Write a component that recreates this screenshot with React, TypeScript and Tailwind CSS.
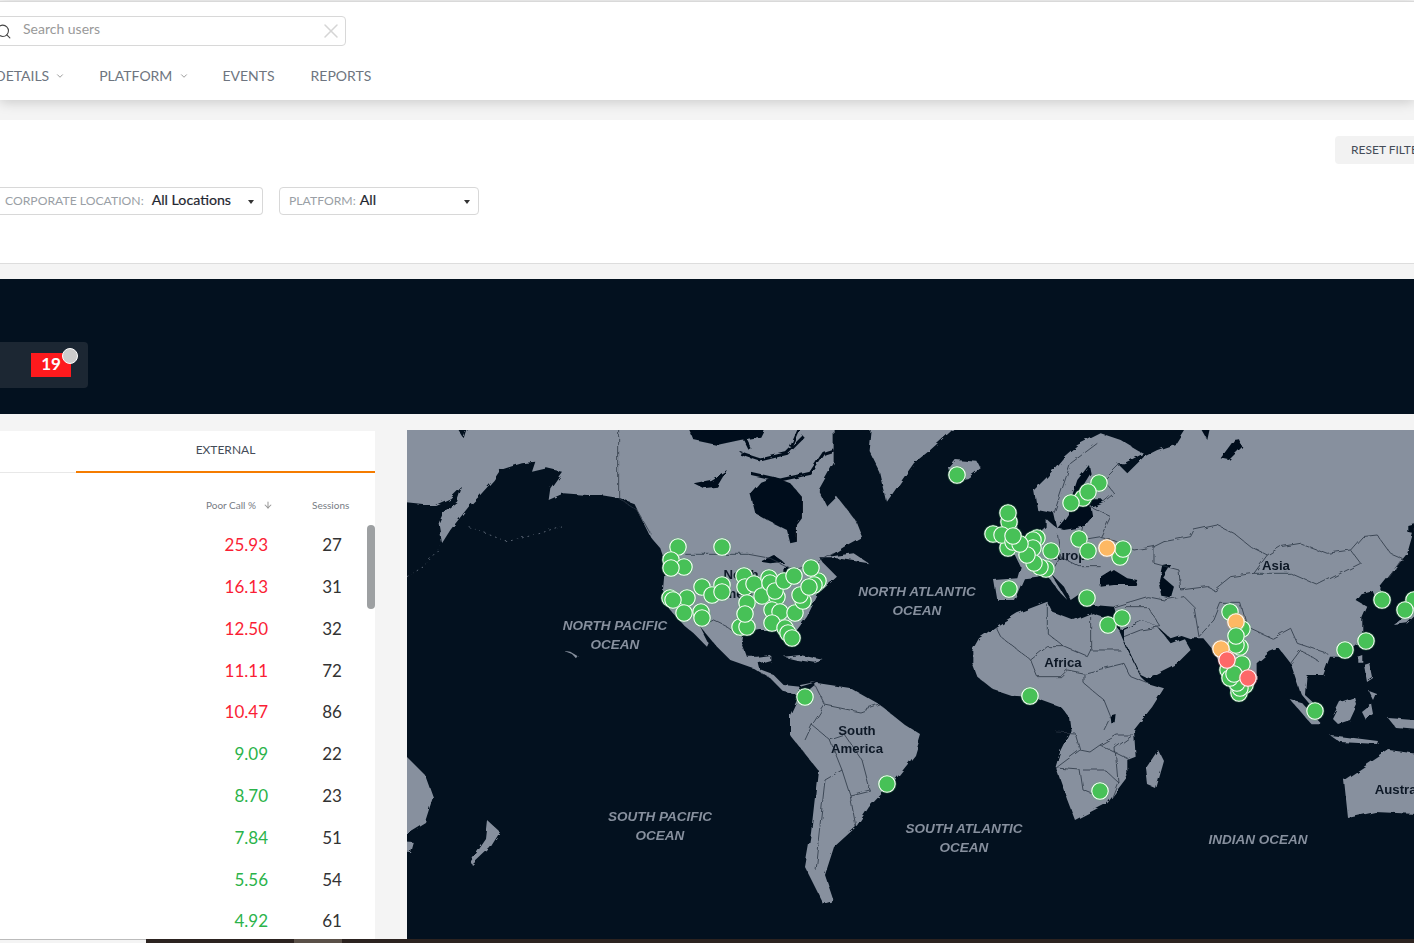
import { ArrowDown, ChevronDown, Search, X } from 'lucide-react';

const rows = [
    { poor: '25.93', sessions: 27, bad: true },
    { poor: '16.13', sessions: 31, bad: true },
    { poor: '12.50', sessions: 32, bad: true },
    { poor: '11.11', sessions: 72, bad: true },
    { poor: '10.47', sessions: 86, bad: true },
    { poor: '9.09', sessions: 22, bad: false },
    { poor: '8.70', sessions: 23, bad: false },
    { poor: '7.84', sessions: 51, bad: false },
    { poor: '5.56', sessions: 54, bad: false },
    { poor: '4.92', sessions: 61, bad: false },
];

const LAND = '#87909e';
const SEA = '#03111f';
const BORDER = '#2b3644';

// marker centres in page pixels, later ones sit on top
const greens = [
    [678, 547], [722, 547], [671, 560], [684, 567], [671, 568], [670, 598], [687, 598], [673, 600], [684, 613],
    [702, 587], [712, 595], [701, 612], [702, 618], [722, 585], [722, 592], [744, 576], [745, 587], [754, 584],
    [740, 627], [747, 627], [747, 603], [745, 614], [762, 596], [769, 578], [770, 583], [777, 597], [775, 591],
    [784, 581], [772, 610], [780, 612], [795, 613], [772, 623], [785, 628], [788, 633], [792, 638], [803, 601],
    [800, 595], [818, 581], [814, 585], [811, 568], [794, 576], [809, 587], [805, 697], [887, 784],
    [957, 475], [1083, 498], [1099, 483], [1088, 492], [1071, 503], [1009, 522], [1008, 513], [993, 534],
    [1008, 548], [1002, 535], [1037, 538], [1033, 540], [1033, 548], [1046, 569], [1040, 567], [1034, 563],
    [1027, 555], [1013, 542], [1020, 544], [1013, 536], [1051, 551], [1079, 539], [1088, 551], [1120, 557],
    [1123, 549], [1009, 589], [1087, 598], [1108, 625], [1122, 618], [1030, 696], [1100, 791], [1315, 711],
    [1382, 600], [1414, 600], [1405, 610], [1345, 650], [1366, 641], [1230, 612], [1242, 629], [1240, 647],
    [1236, 645],
];
const oranges = [[1107, 548], [1236, 622], [1221, 649]];
const lateGreens = [[1236, 636], [1242, 664], [1228, 670], [1245, 685], [1239, 693], [1240, 688], [1237, 683], [1230, 678], [1234, 674]];
const reds = [[1227, 660], [1248, 678]];

const oceanLabels = [
    { x: 615, y: 630, text: 'NORTH PACIFIC' },
    { x: 615, y: 649, text: 'OCEAN' },
    { x: 917, y: 596, text: 'NORTH ATLANTIC' },
    { x: 917, y: 615, text: 'OCEAN' },
    { x: 660, y: 821, text: 'SOUTH PACIFIC' },
    { x: 660, y: 840, text: 'OCEAN' },
    { x: 964, y: 833, text: 'SOUTH ATLANTIC' },
    { x: 964, y: 852, text: 'OCEAN' },
    { x: 1258, y: 844, text: 'INDIAN OCEAN' },
];

const landLabels = [
    { x: 741, y: 579, text: 'North' },
    { x: 741, y: 598, text: 'America' },
    { x: 857, y: 735, text: 'South' },
    { x: 857, y: 753, text: 'America' },
    { x: 1071, y: 560, text: 'Europe' },
    { x: 1276, y: 570, text: 'Asia' },
    { x: 1063, y: 667, text: 'Africa' },
    { x: 1403, y: 794, text: 'Australia' },
];

function Dots({ points, fill }: { points: number[][]; fill: string }) {
    return (
        <>
            {points.map(([x, y], i) => (
                <g key={i}>
                    <circle cx={x} cy={y} r={9.6} fill={fill} opacity={0.35} />
                    <circle cx={x} cy={y} r={8.2} fill={fill} stroke="#ffffff" strokeWidth={1.1} />
                </g>
            ))}
        </>
    );
}

function WorldMap() {
    return (
        <svg viewBox="407 430 1007 509" className="block h-[509px] w-[1007px] bg-[#03111f]">
            <defs>
                {/* roughens the traced polygons into coastlines */}
                <filter id="rough" filterUnits="userSpaceOnUse" x="380" y="400" width="1060" height="560">
                    <feTurbulence type="fractalNoise" baseFrequency="0.09" numOctaves="3" seed="4" />
                    <feDisplacementMap in="SourceGraphic" scale="5" />
                </filter>
            </defs>
            <g filter="url(#rough)">
                {/* americas traced at 3x */}
                <g transform="translate(407 430) scale(0.3333)">
                    <path
                        fill={LAND}
                        d="M-40,215 L50,225 L85,225 L130,205 L165,170 L150,215 L110,245 L95,280 L105,340 L130,300 L185,230 L215,200 L260,150 L280,120 L310,110 L345,100 L385,95 L375,125 L420,115 L465,125 L430,175 L425,210 L470,190 L540,195 L580,195 L640,205 L680,220 L700,260 L730,320 L760,355 L775,400 L768,480 L790,540 L830,585 L860,610 L900,650 L905,640 L880,590 L930,650 L970,690 L1040,715 L1090,745 L1130,785 L1170,795 L1180,765 L1230,755 L1180,770 L1130,765 L1100,735 L1060,720 L1055,700 L1090,690 L1090,675 L1050,680 L1020,680 L1005,640 L1010,610 L1060,600 L1120,600 L1150,640 L1165,650 L1170,600 L1200,560 L1235,490 L1290,440 L1250,400 L1240,385 L1290,385 L1385,400 L1340,370 L1265,380 L1320,345 L1365,320 L1345,270 L1290,200 L1260,230 L1235,180 L1280,100 L1280,-40 L190,-40 L170,25 L130,-40 L-40,-40 Z"
                    />
                    <path fill={LAND} d="M1395,-40 L1385,60 L1420,130 L1440,215 L1521,99 L1570,60 L1680,-40 Z" />
                    <path
                        fill={SEA}
                        d="M1030,190 L1060,155 L1100,140 L1150,160 L1185,200 L1185,265 L1170,285 L1170,335 L1150,340 L1140,300 L1090,275 L1045,250 Z M830,-40 L860,30 L930,45 L1000,30 L1060,20 L1090,-40 Z M860,160 L910,150 L960,120 L930,170 L890,175 Z M1060,395 L1100,375 L1130,395 L1090,400 Z M1130,410 L1145,410 L1140,445 L1128,440 Z"
                    />
                    <path fill="none" stroke={SEA} strokeWidth={9} d="M1000,70 L1060,90 L1140,70 L1190,20 M1030,130 L1120,150 L1210,130 L1250,70 L1280,60 M1180,-20 L1150,50 M1010,20 L1030,60" />
                    <path fill="none" stroke={LAND} strokeWidth={2} strokeDasharray="5 12" d="M0,440 L50,410 L100,350 M185,290 L300,335 L400,310 L470,285" />
                    <path fill={LAND} d="M470,662 L490,665 L515,680 L510,688 L495,672 Z" />
                    <path fill={LAND} d="M1130,680 L1180,675 L1250,690 L1225,698 L1170,690 Z" />
                    <path
                        fill="none"
                        stroke={BORDER}
                        strokeWidth={2.4}
                        d="M635,-40 L635,205 L690,240 L730,310 M835,373 L1025,373 L1090,385 L1160,420 L1230,400 L1280,370 M880,590 L920,570 L960,590 L1000,620"
                    />
                </g>
                {/* south america and the islands in page pixels */}
                <path
                    fill={LAND}
                    d="M797,700 L817,683 L850,688 L880,705 L905,725 L921,735 L915,755 L895,780 L869,807 L856,827 L834,847 L825,875 L834,902 L824,905 L805,867 L811,833 L818,770 L790,735 L790,715 Z"
                />
                <path
                    fill="none"
                    stroke={BORDER}
                    strokeWidth={0.8}
                    d="M815,685 L825,705 L812,725 L830,740 L842,770 L850,795 L856,827 M825,705 L860,712 L880,705 M812,725 L805,740 M830,740 L845,735 L862,760 L870,790 M842,770 L825,780 L815,870 M870,790 L850,795"
                />
                <path fill={LAND} d="M1344,780 L1389,750 L1440,757 L1440,815 L1375,812 L1348,818 Z" />
                <path fill={LAND} d="M380,757 L407,757 L425,775 L433,797 L425,822 L407,833 L380,833 Z M380,840 L414,842 L411,853 L380,850 Z" />
                <path fill={LAND} d="M487,820 L500,832 L490,848 L472,865 L470,860 L485,838 Z" />
                <path fill={LAND} d="M1158,750 L1163,760 L1155,788 L1148,785 L1146,768 Z" />
                <path fill={LAND} d="M1332,718 L1340,702 L1355,697 L1357,705 L1350,720 L1338,724 Z M1364,665 L1370,663 L1373,678 L1367,682 Z M1368,690 L1376,693 L1373,700 Z M1362,712 L1372,704 L1374,715 L1366,720 Z M1388,718 L1440,722 L1440,732 L1396,728 Z M1330,735 L1378,741 L1377,744 L1340,742 Z" />
                {/* old world traced at 3x */}
                <g transform="translate(914 430) scale(0.3333)">
                    <path
                        fill={LAND}
                        d="M370,240 L360,180 L400,140 L450,80 L490,45 L560,10 L620,30 L670,60 L690,70 L630,100 L610,100 L640,130 L690,80 L730,60 L790,40 L840,-40 L1600,-40 L1600,300 L1510,300 L1500,300 L1480,370 L1440,420 L1400,470 L1395,530 L1375,480 L1340,490 L1325,510 L1360,530 L1345,565 L1345,610 L1330,640 L1280,680 L1248,680 L1228,735 L1178,735 L1173,795 L1228,845 L1210,850 L1160,790 L1130,700 L1095,655 L1068,665 L1028,700 L1028,745 L998,795 L958,805 L923,715 L893,655 L868,625 L828,625 L800,615 L770,625 L730,590 L690,570 L620,600 L600,530 L540,525 L500,490 L470,510 L450,470 L410,430 L460,510 L440,490 L395,430 L370,440 L330,445 L310,490 L300,510 L250,510 L240,450 L310,445 L320,410 L300,370 L350,330 L395,290 L395,265 L418,285 L430,295 L420,250 Z"
                    />
                    <path
                        fill={LAND}
                        d="M175,660 L195,625 L245,590 L310,550 L400,515 L415,545 L480,570 L530,550 L590,570 L615,600 L640,660 L680,740 L700,760 L750,775 L715,830 L660,900 L665,980 L640,990 L640,1040 L580,1120 L483,1170 L460,1110 L425,1010 L440,960 L470,900 L465,860 L440,830 L370,805 L300,800 L240,780 L190,740 L175,700 Z"
                    />
                    <path fill={LAND} d="M630,630 L680,735 L700,745 L790,700 L830,660 L810,625 L770,640 L730,590 L690,570 L630,600 Z" />
                    <path fill={LAND} d="M105,115 L125,90 L190,95 L200,115 L160,145 L115,150 Z" />
                    <path fill={LAND} d="M280,250 L305,260 L315,320 L280,335 L270,300 Z M225,305 L255,300 L260,330 L225,335 Z" />
                    <path
                        fill={SEA}
                        d="M430,295 L450,270 L470,240 L475,195 L490,150 L525,105 L530,130 L505,170 L500,205 L560,205 L570,215 L530,230 L535,260 L510,290 L450,300 Z M560,445 L600,420 L640,445 L670,450 L665,465 L600,465 L560,470 Z M745,405 L770,400 L745,440 L780,470 L770,505 L745,500 L735,450 Z M840,-40 L895,-40 L880,30 Z M920,85 L960,30 L975,28 L985,50 L945,90 Z M1480,285 L1500,280 L1500,310 L1480,305 Z"
                    />
                    <path fill={SEA} d="M590,860 L608,855 L605,880 L592,880 Z" />
                    <path fill={LAND} d="M1440,585 L1470,560 L1510,510 L1520,540 L1480,580 Z M1330,680 L1345,675 L1345,695 L1330,695 Z" />
                    <path fill={LAND} d="M1130,810 L1165,820 L1220,880 L1190,880 Z" />
                    <path
                        fill="none"
                        stroke={BORDER}
                        strokeWidth={2.4}
                        d="M720,350 L750,335 L830,320 L840,300 L910,285 L960,310 L1010,350 L1060,375 L1100,350 L1160,340 L1240,370 L1310,360 L1345,320 L1390,315 L1430,370 L1465,385 L1420,450 M1060,375 L1020,430 L1130,430 L1210,465 L1340,400 L1310,360 M795,420 L800,480 L880,470 L900,480 L950,440 L1020,430 M700,500 L750,510 L810,500 L840,530 L855,620 M855,620 L900,570 L920,520 L980,520 L1000,590 L1075,625 L1130,595 L1150,640 L1180,650 L1240,670 M1130,700 L1160,660 L1215,695 M700,500 L600,530 M630,530 L700,530 L740,590 M630,620 L680,600 L740,590 M245,590 L260,620 L350,690 L400,650 L450,650 L520,680 L530,660 L530,560 M400,520 L400,610 L450,650 M350,690 L370,740 L440,740 L460,720 L510,730 L630,700 M530,660 L620,660 M510,730 L510,760 L570,810 L590,860 L570,900 M630,700 L650,740 L700,760 M510,290 L500,330 L560,320 L600,330 L660,360 L720,350 M430,310 L440,380 L500,410 L560,410 M440,380 L410,430 M720,350 L720,400 L795,420 M530,230 L590,260 L560,320 M620,100 L570,150 L600,190 L570,215 M420,250 L470,100 L550,40"
                    />
                </g>
                <path
                    fill="none"
                    stroke={BORDER}
                    strokeWidth={0.8}
                    d="M1056,732 L1075,733 L1080,750 L1090,752 L1100,745 L1130,760 M1080,750 L1056,768 L1080,770 L1083,790 L1095,795 M1083,770 L1105,770 L1118,782 L1112,797 M1100,745 L1117,735 L1133,735 L1115,748 L1118,782"
                />
            </g>
            {oceanLabels.map((l) => (
                <text
                    key={l.text + l.y}
                    x={l.x}
                    y={l.y}
                    textAnchor="middle"
                    fontFamily="'Liberation Sans', Arial, sans-serif"
                    fontSize={13.5}
                    fontStyle="italic"
                    fontWeight={700}
                    fill="#87909e"
                >
                    {l.text}
                </text>
            ))}
            {landLabels.map((l) => (
                <text
                    key={l.text + l.y}
                    x={l.x}
                    y={l.y}
                    textAnchor="middle"
                    fontFamily="'Liberation Sans', Arial, sans-serif"
                    fontSize={13.2}
                    fontWeight={700}
                    fill="#0d1826"
                >
                    {l.text}
                </text>
            ))}
            <Dots points={greens} fill="#47c157" />
            <Dots points={oranges} fill="#fdb863" />
            <Dots points={lateGreens} fill="#47c157" />
            <Dots points={reds} fill="#fd6868" />
        </svg>
    );
}

function Caret() {
    return <span className="mt-[2px] h-0 w-0 shrink-0 border-x-[3.5px] border-t-[4px] border-x-transparent border-t-[#333333]" />;
}

export default function App() {
    return (
        <div className="flex h-[943px] w-[1414px] flex-col overflow-hidden bg-[#f4f4f4] font-['Lato','Noto_Sans',sans-serif]">
            <header className="relative z-10 mt-px h-[99px] shrink-0 border-t border-[#d9d9d9] bg-white shadow-[0_2px_12px_rgba(0,0,0,0.18)]">
                <div className="-ml-[10px] mt-[14px] flex h-[30px] w-[356px] items-center rounded-sm border border-[#d8d8d8] pr-[2px]">
                    <Search size={17} strokeWidth={1.5} className="ml-[4px] shrink-0 text-[#444444]" />
                    <span className="ml-[11px] flex-1 -translate-y-[2px] text-sm text-[#999999]">Search users</span>
                    <X size={24} strokeWidth={1.5} className="text-[#d5d5d5]" />
                </div>
                <nav className="mt-[20px] -ml-[5px] flex items-center text-sm leading-5 text-[#6e7580]">
                    <span>DETAILS</span>
                    <ChevronDown size={10} className="ml-[6px] text-[#888888]" />
                    <span className="ml-[34px]">PLATFORM</span>
                    <ChevronDown size={10} className="ml-[7px] text-[#888888]" />
                    <span className="ml-[33px]">EVENTS</span>
                    <span className="ml-[36px]">REPORTS</span>
                </nav>
            </header>

            <section className="mt-[20px] h-[144px] shrink-0 border-b border-[#dddddd] bg-white">
                <div className="flex justify-end pt-[16px]">
                    <button
                        type="button"
                        className="h-[28px] w-[79px] overflow-hidden whitespace-nowrap rounded-l-sm bg-[#f2f2f2] pl-[16px] text-left text-xs text-[#444c58]"
                    >
                        RESET FILTERS
                    </button>
                </div>
                <div className="mt-[23px] flex gap-[16px]">
                    <div className="flex h-[28px] w-[263px] items-center rounded-r-sm border border-l-0 border-[#d8d8d8] pl-[5px] pr-[8px]">
                        <span className="text-[12.2px] text-[#9a9fa6]">CORPORATE LOCATION:</span>
                        <span className="ml-[8px] flex-1 -translate-y-px text-[14.2px] text-[#1f2630] [-webkit-text-stroke:0.2px_#1f2630]">All Locations</span>
                        <Caret />
                    </div>
                    <div className="flex h-[28px] w-[200px] items-center rounded-sm border border-[#d8d8d8] pl-[9px] pr-[8px]">
                        <span className="text-[12.2px] text-[#9a9fa6]">PLATFORM:</span>
                        <span className="ml-[4px] flex-1 -translate-y-px text-[14.2px] text-[#1f2630] [-webkit-text-stroke:0.2px_#1f2630]">All</span>
                        <Caret />
                    </div>
                </div>
            </section>

            <section className="mt-[15px] h-[135px] shrink-0 bg-[#03111f] pt-[63px]">
                <div className="flex h-[46px] w-[88px] items-center rounded-r-sm bg-[#1c2733] pl-[31px]">
                    <div className="relative flex h-[24px] w-[40px] items-center justify-center bg-[#fe1a1d] pb-[2px] text-[17px] font-bold text-white">
                        19
                        <span className="absolute -right-[7px] -top-[5px] h-[16px] w-[16px] rounded-full border-[1.5px] border-white bg-[#cccccc]" />
                    </div>
                </div>
            </section>

            <section className="mt-[16px] flex h-[509px] shrink-0 items-start">
                <div className="relative mt-px h-[508px] w-[375px] shrink-0 overflow-hidden bg-white">
                    <div className="flex h-[42px] text-xs text-[#444c58]">
                        <div className="w-[76px] border-b border-[#e8e8e8]" />
                        <div className="flex w-[299px] items-center justify-center border-b-2 border-[#f57c00] pb-[3px]">EXTERNAL</div>
                    </div>
                    <div className="mt-[25px] flex h-[14px] items-center text-[10px] text-[#777c84]">
                        <span className="ml-[206px]">Poor Call %</span>
                        <ArrowDown size={10} strokeWidth={2.5} className="ml-[7px] text-[#999999]" />
                        <span className="ml-[39px]">Sessions</span>
                    </div>
                    <div className="mt-[12px]">
                        {rows.map((row) => (
                            <div key={row.poor} className="flex h-[41.8px] items-center text-[17px]">
                                <span className={`w-[268px] text-right ${row.bad ? 'text-[#fa1e35]' : 'text-[#2bb34a]'}`}>{row.poor}</span>
                                <span className="ml-[40px] w-[48px] text-center text-[#333333]">{row.sessions}</span>
                            </div>
                        ))}
                    </div>
                    <div className="absolute right-0 top-[94px] h-[84px] w-[8px] rounded-full bg-[#9da0a2]" />
                </div>
                <div className="ml-[32px] shrink-0">
                    <WorldMap />
                </div>
            </section>

            <footer className="flex h-[4px] shrink-0">
                <div className="w-[146px] border-t border-[#bbbbbb] bg-[#f4f4f4]" />
                <div className="w-[148px] bg-[#2c2320]" />
                <div className="w-[48px] bg-[#5a5048]" />
                <div className="flex-1 bg-[#2c2320]" />
            </footer>
        </div>
    );
}
